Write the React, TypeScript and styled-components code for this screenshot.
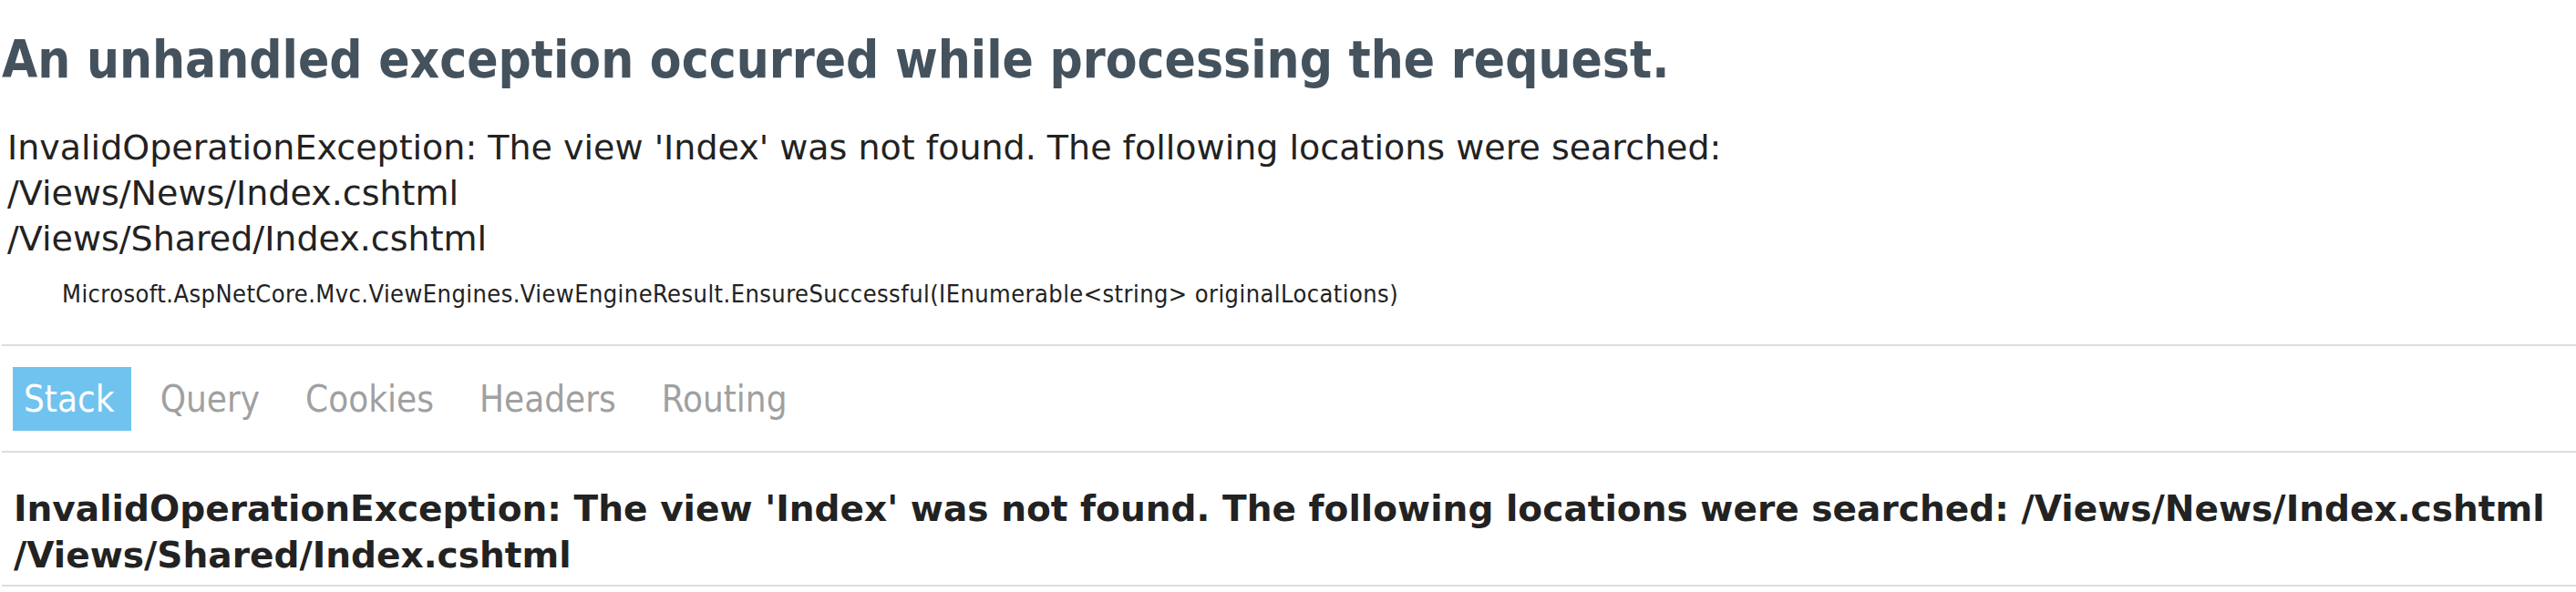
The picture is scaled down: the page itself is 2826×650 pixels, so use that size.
import React from "react";
import styled, { createGlobalStyle } from "styled-components";

const GlobalStyle = createGlobalStyle`
  html, body {
    margin: 0;
    padding: 0;
    background: #ffffff;
  }
  body {
    font-family: "DejaVu Sans", Tahoma, sans-serif;
    color: #222222;
  }
`;

const Page = styled.div`
  padding-left: 2px;
`;

const Title = styled.h1`
  margin: 33px 0 0 0;
  font-family: "DejaVu Sans Condensed", "DejaVu Sans", Tahoma, sans-serif;
  font-stretch: condensed;
  font-size: 56.3px;
  font-weight: 700;
  color: #44525e;
  line-height: normal;
`;

const ErrorTitle = styled.div`
  margin-top: 39px;
  padding: 0 0 0 6px;
  font-size: 38px;
  line-height: 50px;
  color: #222222;
`;

const Location = styled.div`
  margin: 20px 0 0 66px;
  font-family: "DejaVu Sans Condensed", "DejaVu Sans", Tahoma, sans-serif;
  font-stretch: condensed;
  font-size: 27px;
  letter-spacing: 0.43px;
  line-height: normal;
  color: #222222;
`;

const Header = styled.ul`
  list-style: none;
  margin: 40px 0 0 0;
  padding: 23px 0 22px 12px;
  border-top: 2px solid #dddddd;
  border-bottom: 2px solid #dddddd;
  display: flex;
  gap: 20px;
  font-family: "DejaVu Sans Condensed", "DejaVu Sans", Tahoma, sans-serif;
  font-stretch: condensed;
  font-size: 40px;
`;

const Tab = styled.li<{ $selected?: boolean }>`
  padding: 12px 18px 12px 12px;
  line-height: normal;
  color: ${(p) => (p.$selected ? "#ffffff" : "#a0a0a0")};
  background: ${(p) => (p.$selected ? "#70c3ef" : "transparent")};
  cursor: pointer;
`;

const StackError = styled.div`
  padding: 36px 8px 7px 13px;
  border-bottom: 2px solid #dddddd;
`;

const Details = styled.h3`
  margin: 0;
  font-size: 39.1px;
  font-weight: 700;
  line-height: 51px;
  color: #222222;
`;

const tabs = ["Stack", "Query", "Cookies", "Headers", "Routing"];

export default function App() {
  return (
    <Page>
      <GlobalStyle />
      <Title>An unhandled exception occurred while processing the request.</Title>
      <ErrorTitle>
        InvalidOperationException: The view 'Index' was not found. The following locations were searched:
        <br />
        /Views/News/Index.cshtml
        <br />
        /Views/Shared/Index.cshtml
      </ErrorTitle>
      <Location>
        Microsoft.AspNetCore.Mvc.ViewEngines.ViewEngineResult.EnsureSuccessful(IEnumerable&lt;string&gt; originalLocations)
      </Location>
      <Header>
        {tabs.map((t, i) => (
          <Tab key={t} $selected={i === 0}>
            {t}
          </Tab>
        ))}
      </Header>
      <StackError>
        <Details>
          InvalidOperationException: The view 'Index' was not found. The following locations were searched: /Views/News/Index.cshtml /Views/Shared/Index.cshtml
        </Details>
      </StackError>
    </Page>
  );
}
